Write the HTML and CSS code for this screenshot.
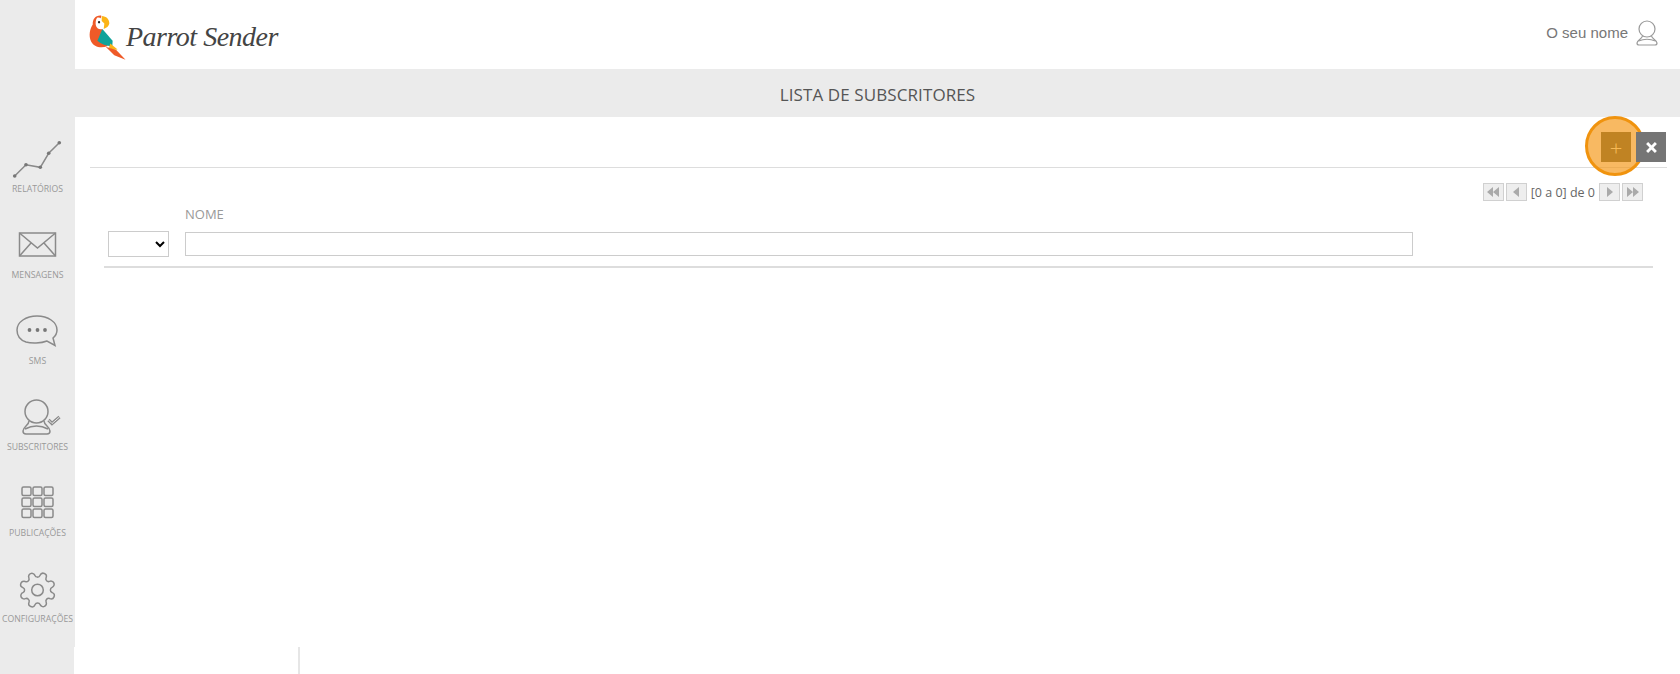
FILE: index.html
```html
<!DOCTYPE html>
<html>
  <head>
    <title>Parrot Sender - Lista de subscritores</title>
    <link rel="stylesheet" href="styles.css">
  </head>
  <body>
    <nav class="sidebar">
      <a class="nav-item">
        <svg class="nav-icon" viewBox="0 0 75 46">
          <polyline points="14.7,40 26,28.7 40.3,31.3 48.7,17.3 59.3,6.7" />
          <g class="dots">
            <circle cx="14.7" cy="40" r="1.8" />
            <circle cx="26" cy="28.7" r="1.8" />
            <circle cx="40.3" cy="31.3" r="1.8" />
            <circle cx="48.7" cy="17.3" r="1.8" />
            <circle cx="59.3" cy="6.7" r="1.8" />
          </g>
        </svg>
        <span>RELATÓRIOS</span>
      </a>
      <a class="nav-item">
        <svg class="nav-icon" viewBox="0 0 75 46">
          <rect x="19.5" y="11" width="36" height="23" />
          <path d="M19.5 11 L37.5 26 L55.5 11 M19.5 34 L31 21 M55.5 34 L44 21" />
        </svg>
        <span>MENSAGENS</span>
      </a>
      <a class="nav-item">
        <svg class="nav-icon" viewBox="0 0 75 46">
          <path d="M47 33 C41 35.5 31 35.5 26 34 C20 32 17 27 17 22 C17 14 26 8 37 8 C48 8 57 14 57 22 C57 25.5 55.5 28 53 30 L55 37.5 Z" />
          <g class="dots">
            <circle cx="29.5" cy="22" r="1.9" />
            <circle cx="37.5" cy="22" r="1.9" />
            <circle cx="45" cy="22" r="1.9" />
          </g>
        </svg>
        <span>SMS</span>
      </a>
      <a class="nav-item">
        <svg class="nav-icon" viewBox="0 0 75 46">
          <circle cx="36.5" cy="17.5" r="11.5" />
          <path d="M29 27 C29 31 23 33 23 37 Q23 40 26 40 L47 40 Q50 40 50 37 C50 33 44 31 44 27" />
          <path d="M25 35 Q36.5 29 48 35" />
          <path class="check" d="M48.5 26 L52 29.5 L59.5 23" />
          <path class="check-inner" d="M48.5 26 L52 29.5 L59.5 23" />
        </svg>
        <span>SUBSCRITORES</span>
      </a>
      <a class="nav-item">
        <svg class="nav-icon" viewBox="0 0 75 46">
          <rect x="22" y="7" width="9" height="8.5" rx="1.5" />
          <rect x="33" y="7" width="9" height="8.5" rx="1.5" />
          <rect x="44" y="7" width="9" height="8.5" rx="1.5" />
          <rect x="22" y="18" width="9" height="8.5" rx="1.5" />
          <rect x="33" y="18" width="9" height="8.5" rx="1.5" />
          <rect x="44" y="18" width="9" height="8.5" rx="1.5" />
          <rect x="22" y="29" width="9" height="8.5" rx="1.5" />
          <rect x="33" y="29" width="9" height="8.5" rx="1.5" />
          <rect x="44" y="29" width="9" height="8.5" rx="1.5" />
        </svg>
        <span>PUBLICAÇÕES</span>
      </a>
      <a class="nav-item">
        <svg class="nav-icon" viewBox="0 0 75 46">
          <circle cx="37.5" cy="24" r="5.8" />
          <g transform="translate(18 4.5) scale(1.625) rotate(22.5 12 12)">
            <path class="thin" d="M19.4 15a1.65 1.65 0 0 0 .33 1.82l.06.06a2 2 0 0 1 0 2.83 2 2 0 0 1-2.83 0l-.06-.06a1.65 1.65 0 0 0-1.82-.33 1.65 1.65 0 0 0-1 1.51V21a2 2 0 0 1-2 2 2 2 0 0 1-2-2v-.09A1.65 1.65 0 0 0 9 19.4a1.65 1.65 0 0 0-1.82.33l-.06.06a2 2 0 0 1-2.83 0 2 2 0 0 1 0-2.83l.06-.06a1.65 1.65 0 0 0 .33-1.82 1.65 1.65 0 0 0-1.51-1H3a2 2 0 0 1-2-2 2 2 0 0 1 2-2h.09A1.65 1.65 0 0 0 4.6 9a1.65 1.65 0 0 0-.33-1.82l-.06-.06a2 2 0 0 1 0-2.83 2 2 0 0 1 2.83 0l.06.06a1.65 1.65 0 0 0 1.82.33H9a1.65 1.65 0 0 0 1-1.51V3a2 2 0 0 1 2-2 2 2 0 0 1 2 2v.09a1.65 1.65 0 0 0 1 1.51 1.65 1.65 0 0 0 1.82-.33l.06-.06a2 2 0 0 1 2.83 0 2 2 0 0 1 0 2.83l-.06.06a1.65 1.65 0 0 0-.33 1.82V9a1.65 1.65 0 0 0 1.51 1H21a2 2 0 0 1 2 2 2 2 0 0 1-2 2h-.09a1.65 1.65 0 0 0-1.51 1z" />
          </g>
        </svg>
        <span>CONFIGURAÇÕES</span>
      </a>
    </nav>

    <div class="main">
      <header class="topbar">
        <div class="logo">
          <svg class="parrot" viewBox="260 40 120 145">
            <path fill="#ef5a28" d="M303 48 C285 46 276 60 277 75 C268 88 264 110 272 126 C280 142 300 148 322 140 L305 88 L300 60 Z" />
            <path fill="#ffffff" d="M290 54 C298 52 305 56 306 64 L306 88 C298 92 288 86 286 76 C285 68 286 60 290 54 Z" />
            <circle cx="296" cy="68" r="3.5" fill="#222222" />
            <path fill="#fbb416" d="M304 49 C318 49 328 60 327 72 C326 80 318 86 310 88 L312 72 L304 64 Z" />
            <path fill="#0fa39a" d="M306 88 L337 124 L336 141 C318 140 302 134 291 124 Z" />
            <path fill="#fbb416" d="M330 132 L352 150 L336 152 L326 144 Z" />
            <path fill="#ef5a28" d="M316 142 L348 152 L376 181 L342 168 Z" />
          </svg>
          <span class="logo-text">Parrot Sender</span>
        </div>
        <div class="user">
          <span>O seu nome</span>
          <svg class="user-icon" viewBox="0 0 22 26">
            <circle cx="11" cy="9" r="8" />
            <path d="M6.5 16 C6 19 1 20 1 23 Q1 25 3 25 L19 25 Q21 25 21 23 C21 20 16 19 15.5 16" />
            <path d="M2.5 21 Q11 17.5 19.5 21" />
          </svg>
        </div>
      </header>

      <h1 class="page-title">LISTA DE SUBSCRITORES</h1>

      <div class="content">
        <div class="toolbar">
          <button class="tool-btn add">
            +
            <span class="highlight"></span>
          </button>
          <button class="tool-btn close">
            <svg class="close-icon" viewBox="0 0 10 10"><path d="M1 1 L9 9 M9 1 L1 9" /></svg>
          </button>
        </div>

        <div class="pager">
          <button class="page-btn"><svg viewBox="0 0 14 10"><path d="M7 0 V10 L1 5 Z M13 0 V10 L7 5 Z" /></svg></button>
          <button class="page-btn"><svg viewBox="0 0 14 10"><path d="M10 0 V10 L4 5 Z" /></svg></button>
          <span class="page-info">[0 a 0] de 0</span>
          <button class="page-btn"><svg viewBox="0 0 14 10"><path d="M4 0 V10 L10 5 Z" /></svg></button>
          <button class="page-btn"><svg viewBox="0 0 14 10"><path d="M1 0 V10 L7 5 Z M7 0 V10 L13 5 Z" /></svg></button>
        </div>

        <div class="list">
          <label class="name-label">NOME</label>
          <div class="filter-row">
            <select class="filter-select"><option></option></select>
            <input class="filter-input" type="text">
          </div>
        </div>
      </div>

      <footer class="footer">
        <div class="footer-cell"></div>
      </footer>
    </div>
  </body>
</html>
```

FILE: styles.css
```css
* {
  box-sizing: border-box;
}
html, body {
  height: 100%;
}
body {
  margin: 0;
  display: flex;
  overflow: hidden;
  background-color: #ebebeb;
  font-family: "Open Sans", Arial, sans-serif;
  color: #666;
}

/* left menu */
.sidebar {
  width: 75px;
  flex-shrink: 0;
  padding-top: 136px;
}
.nav-item {
  height: 86px;
  display: flex;
  flex-direction: column;
  align-items: center;
  white-space: nowrap;
  font-size: 8.7px;
  line-height: 13px;
  color: #999;
}
.nav-icon {
  width: 75px;
  height: 46px;
  flex-shrink: 0;
  margin-bottom: 1px;
  fill: none;
  stroke: #8a8a8a;
  stroke-width: 1.5;
}
.nav-icon .dots {
  fill: #777;
  stroke: none;
}
.nav-icon .thin {
  stroke-width: 0.92;
}
.nav-icon .check {
  stroke: #8a8a8a;
  stroke-width: 3.2;
}
.nav-icon .check-inner {
  stroke: #ebebeb;
  stroke-width: 1;
}

.main {
  flex: 1;
  display: flex;
  flex-direction: column;
  min-width: 0;
}

/* header */
.topbar {
  height: 69px;
  display: flex;
  align-items: center;
  justify-content: space-between;
  padding: 5px 22px 0 12px;
  background-color: #fff;
}
.logo {
  display: flex;
  align-items: center;
}
.parrot {
  width: 40px;
  height: 48px;
}
.logo-text {
  margin-left: -1px;
  font-family: "Liberation Serif", serif;
  font-style: italic;
  font-size: 28px;
  letter-spacing: -0.5px;
  color: #444;
}
.user {
  display: flex;
  align-items: center;
  gap: 8px;
  font-family: "Liberation Sans", Arial, sans-serif;
  font-size: 15px;
  color: #777;
  margin-top: -9px;
}
.user-icon {
  width: 22px;
  height: 26px;
  fill: none;
  stroke: #999;
  stroke-width: 1.2;
}

.page-title {
  height: 48px;
  margin: 0;
  font-size: 17px;
  font-weight: 400;
  letter-spacing: 0.1px;
  line-height: 51px;
  text-align: center;
  color: #555;
}

.content {
  flex: 1;
  background-color: #fff;
}

/* tool buttons */
.toolbar {
  display: flex;
  justify-content: flex-end;
  gap: 5px;
  margin: 0 13px 0 15px;
  padding: 15px 1px 5px 0;
  border-bottom: 1px solid #ddd;
}
.tool-btn {
  position: relative;
  width: 30px;
  height: 30px;
  padding: 0;
  border: 0;
  font-family: "Open Sans", Arial, sans-serif;
}
/* colours are chosen so they read right through the spotlight */
.tool-btn.add {
  background-color: rgb(82, 88, 59);
  font-size: 22px;
  font-weight: 300;
  line-height: 28px;
  color: rgb(250, 255, 218);
}
.tool-btn.close {
  display: flex;
  align-items: center;
  justify-content: center;
  background-color: #757575;
}
.close-icon {
  width: 11px;
  height: 11px;
  fill: none;
  stroke: #fff;
  stroke-width: 2.6;
}
/* tutorial spotlight over the add button */
.highlight {
  position: absolute;
  left: -16px;
  top: -16px;
  width: 60px;
  height: 60px;
  border: 3px solid #f0930e;
  border-radius: 50%;
  background-color: rgba(244, 152, 24, 0.68);
}

/* pager */
.pager {
  display: flex;
  justify-content: flex-end;
  align-items: center;
  gap: 2px;
  height: 18px;
  margin-top: 15px;
  padding-right: 37px;
}
.page-btn {
  width: 21px;
  height: 18px;
  padding: 0;
  display: flex;
  align-items: center;
  justify-content: center;
  background-color: #eee;
  border: 1px solid #d0d0d0;
}
.page-btn svg {
  width: 14px;
  height: 10px;
  fill: #aaa;
}
.page-info {
  margin: 0 2px;
  font-size: 12.5px;
  color: #666;
}

/* list */
.list {
  margin: 4px 27px 0 29px;
  padding-bottom: 9px;
  border-bottom: 2px solid #ddd;
}
.name-label {
  display: block;
  margin-left: 81px;
  font-size: 13px;
  line-height: 18px;
  color: #999;
}
.filter-row {
  display: flex;
  align-items: center;
  gap: 16px;
  margin-top: 8px;
  padding-left: 4px;
}
.filter-select {
  width: 61px;
  height: 26px;
  background-color: #fff;
  border: 1px solid #ccc;
}
.filter-input {
  width: 1228px;
  height: 24px;
  padding: 0 4px;
  background-color: #fff;
  border: 1px solid #ccc;
  outline: 0;
}

.footer {
  height: 27px;
  margin-left: -1px;
  background-color: #fff;
}
.footer-cell {
  width: 226px;
  height: 100%;
  border-right: 2px solid #e6e6e6;
}
```
